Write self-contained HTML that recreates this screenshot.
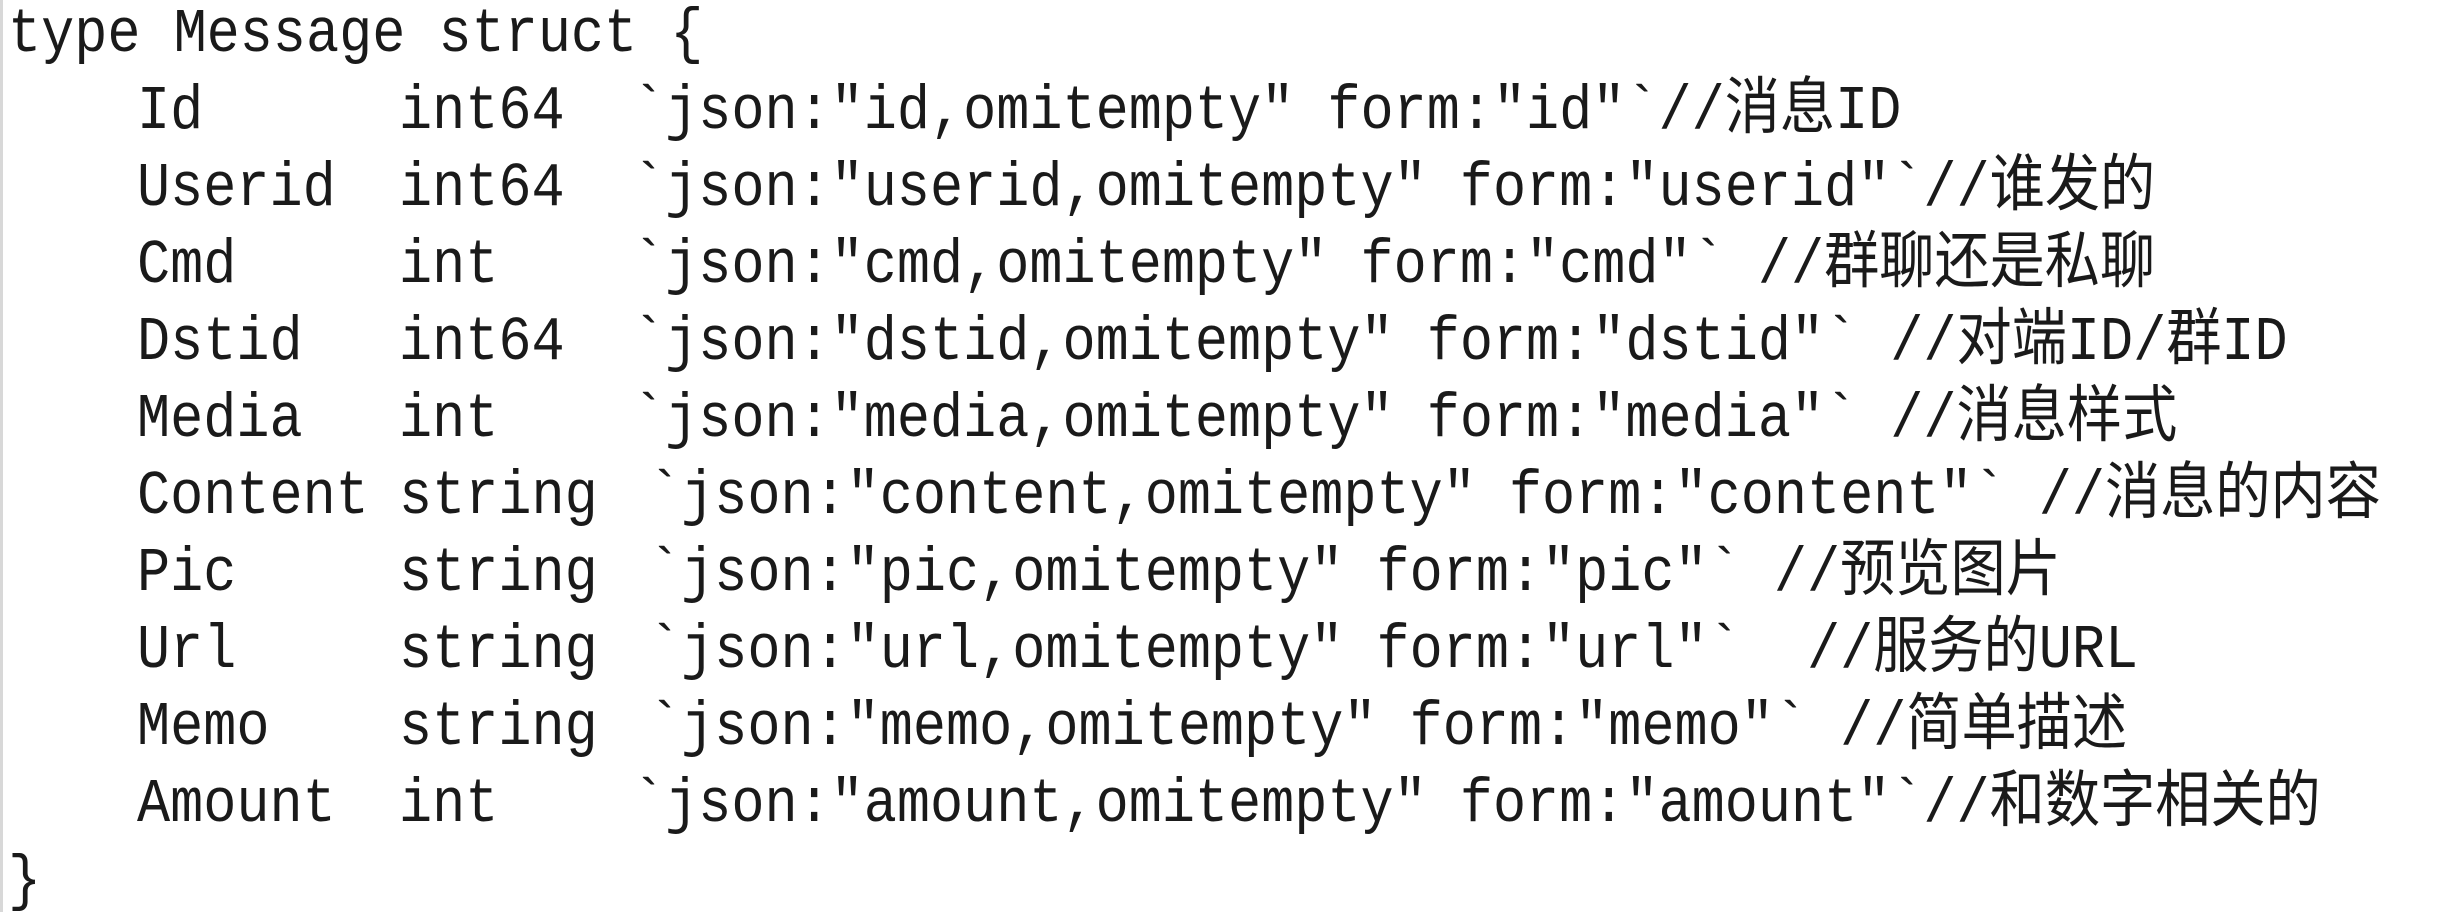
<!DOCTYPE html>
<html><head><meta charset="utf-8"><style>
html,body{margin:0;padding:0;background:#fff;width:2446px;height:912px;overflow:hidden}
body{position:relative;font-family:"Liberation Mono","Noto Sans CJK SC",monospace;font-size:62px;color:#1a1a1a}
.bar{position:absolute;left:0;top:0;width:3px;height:912px;background:#d8d8d8}
.s{position:absolute;white-space:pre;line-height:77px;height:77px;transform:scaleX(0.89);transform-origin:0 0}
</style></head><body>
<div class="bar"></div>
<div class="s" style="left:8px;top:-4px">type Message struct {</div>

<div class="s" style="left:137px;top:73px">Id</div>
<div class="s" style="left:399px;top:73px">int64</div>
<div class="s" style="left:632px;top:73px">`json:"id,omitempty" form:"id"`//消息ID</div>

<div class="s" style="left:137px;top:150px">Userid</div>
<div class="s" style="left:399px;top:150px">int64</div>
<div class="s" style="left:632px;top:150px">`json:"userid,omitempty" form:"userid"`//谁发的</div>

<div class="s" style="left:137px;top:227px">Cmd</div>
<div class="s" style="left:399px;top:227px">int</div>
<div class="s" style="left:632px;top:227px">`json:"cmd,omitempty" form:"cmd"` //群聊还是私聊</div>

<div class="s" style="left:137px;top:304px">Dstid</div>
<div class="s" style="left:399px;top:304px">int64</div>
<div class="s" style="left:632px;top:304px">`json:"dstid,omitempty" form:"dstid"` //对端ID/群ID</div>

<div class="s" style="left:137px;top:381px">Media</div>
<div class="s" style="left:399px;top:381px">int</div>
<div class="s" style="left:632px;top:381px">`json:"media,omitempty" form:"media"` //消息样式</div>

<div class="s" style="left:137px;top:458px">Content</div>
<div class="s" style="left:399px;top:458px">string</div>
<div class="s" style="left:648px;top:458px">`json:"content,omitempty" form:"content"` //消息的内容</div>

<div class="s" style="left:137px;top:535px">Pic</div>
<div class="s" style="left:399px;top:535px">string</div>
<div class="s" style="left:648px;top:535px">`json:"pic,omitempty" form:"pic"` //预览图片</div>

<div class="s" style="left:137px;top:612px">Url</div>
<div class="s" style="left:399px;top:612px">string</div>
<div class="s" style="left:648px;top:612px">`json:"url,omitempty" form:"url"`  //服务的URL</div>

<div class="s" style="left:137px;top:689px">Memo</div>
<div class="s" style="left:399px;top:689px">string</div>
<div class="s" style="left:648px;top:689px">`json:"memo,omitempty" form:"memo"` //简单描述</div>

<div class="s" style="left:137px;top:766px">Amount</div>
<div class="s" style="left:399px;top:766px">int</div>
<div class="s" style="left:632px;top:766px">`json:"amount,omitempty" form:"amount"`//和数字相关的</div>

<div class="s" style="left:8px;top:843px">}</div>
</body></html>
